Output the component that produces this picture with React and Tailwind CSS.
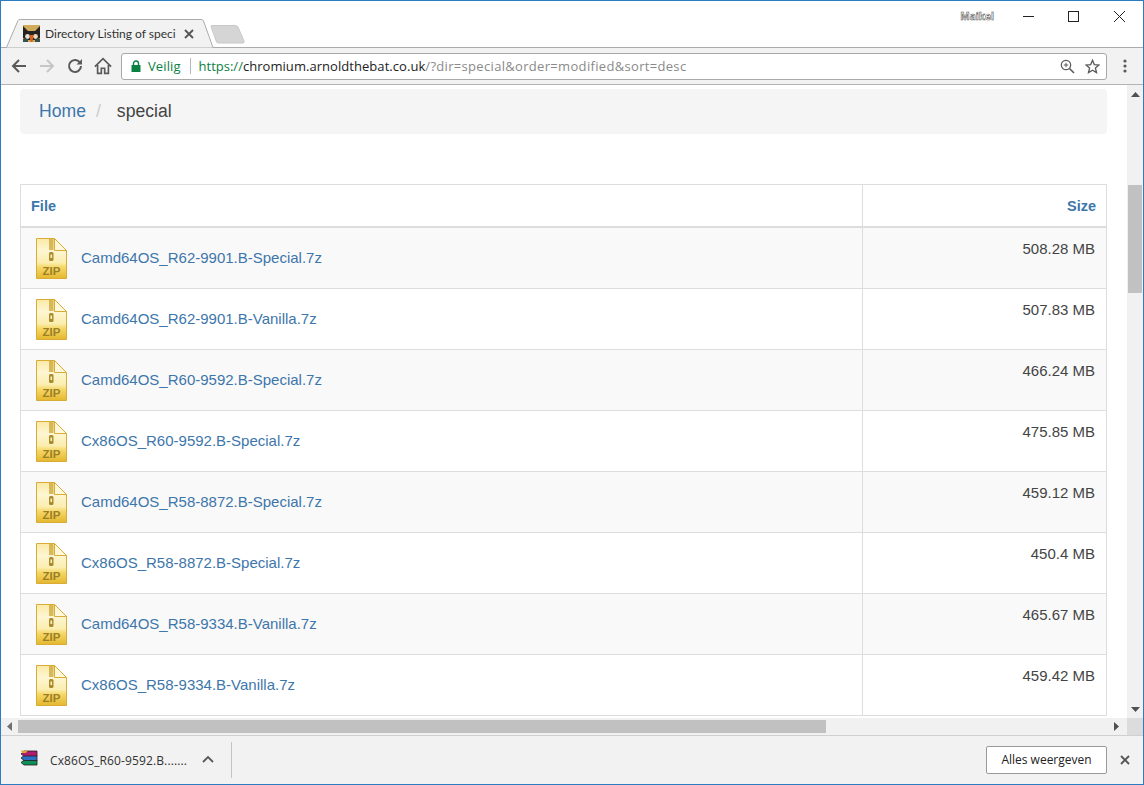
import React from "react";

const rows = [
  ["Camd64OS_R62-9901.B-Special.7z", "508.28 MB"],
  ["Camd64OS_R62-9901.B-Vanilla.7z", "507.83 MB"],
  ["Camd64OS_R60-9592.B-Special.7z", "466.24 MB"],
  ["Cx86OS_R60-9592.B-Special.7z", "475.85 MB"],
  ["Camd64OS_R58-8872.B-Special.7z", "459.12 MB"],
  ["Cx86OS_R58-8872.B-Special.7z", "450.4 MB"],
  ["Camd64OS_R58-9334.B-Vanilla.7z", "465.67 MB"],
  ["Cx86OS_R58-9334.B-Vanilla.7z", "459.42 MB"],
];

function ZipIcon({ id, first }) {
  return (
    <svg width="31" height="41" viewBox="0 0 31 41" className={first ? "block shrink-0 translate-y-px" : "block shrink-0"}>
      <defs>
        <linearGradient id={id} x1="0" y1="0" x2="0" y2="1">
          <stop offset="0" stopColor="#fbe9a6" />
          <stop offset="0.3" stopColor="#fdf6d2" />
          <stop offset="0.6" stopColor="#fbeeb0" />
          <stop offset="0.72" stopColor="#f5d868" />
          <stop offset="1" stopColor="#e4b72e" />
        </linearGradient>
      </defs>
      <path d="M0.5 0.5H18.5L30.5 12.5V40.5H0.5Z" fill={`url(#${id})`} stroke="#d9ad35" />
      <path d="M18.5 0.5V12.5H30.5Z" fill="#fff8da" stroke="#d9ad35" />
      <rect x="13" y="1" width="4.5" height="11" fill="#c9a02c" opacity="0.7" />
      <rect x="13" y="14" width="4.5" height="9" rx="1.5" fill="#a98a2c" />
      <rect x="14.4" y="16.5" width="1.7" height="3.5" fill="#fbeeb0" />
      <text x="15.5" y="37" textAnchor="middle" fontFamily="'Liberation Sans', sans-serif" fontWeight="700" fontSize="11.5" fill="#9b7f26">ZIP</text>
    </svg>
  );
}

function Favicon() {
  return (
    <svg width="17" height="17" viewBox="0 0 17 17" className="block shrink-0">
      <rect width="17" height="17" fill="#d0ab5c" />
      <path d="M0 1 5 6 12 6 17 1V13L13 15H4L0 13Z" fill="#26221e" />
      <circle cx="4.5" cy="11.5" r="2.4" fill="#e4dfd6" />
      <circle cx="12.5" cy="11.5" r="2.4" fill="#e8d9bf" />
      <path d="M6.5 10H10.5L9.5 17H7.5Z" fill="#dc5f1c" />
      <rect x="0" y="14" width="5" height="3" fill="#34504f" />
      <rect x="12" y="14" width="5" height="3" fill="#34504f" />
    </svg>
  );
}

function Tab() {
  return (
    <div className="relative w-[213px] h-[29px] ml-[5px] flex items-center pl-[17px] pr-[20px]">
      <svg width="213" height="29" viewBox="0 0 213 29" className="absolute left-0 top-0">
        <path d="M0.5 28.5 12 1.5Q12.5 0.5 14 0.5H195Q197 0.5 197.5 2L207 28.5" fill="#f2f2f2" stroke="#ababab" />
      </svg>
      <div className="relative flex items-center w-full">
        <Favicon />
        <span className="ml-[5px] w-[131px] whitespace-nowrap text-[12px] leading-[16px] text-[#333] font-['Lato',sans-serif]">
          Directory Listing of speci
        </span>
        <svg width="10" height="10" viewBox="0 0 10 10" className="ml-[8px]">
          <path d="M1 1 9 9M9 1 1 9" stroke="#555" strokeWidth="1.8" />
        </svg>
      </div>
    </div>
  );
}

function TitleBar() {
  return (
    <div className="relative h-[47px] shrink-0 bg-white flex items-end border-b border-[#ababab]">
      <div className="flex items-end -mb-px z-10">
        <Tab />
        <svg width="36" height="20" viewBox="0 0 36 20" className="-ml-[9px] mb-[3px]">
          <path d="M1 1.5Q1 0.5 2 0.5H25Q27 0.5 28 2L34 16Q34.5 18 33 18H8Q7 18 6.5 17Z" fill="#d5d5d5" stroke="#c8c8c8" />
        </svg>
      </div>
      <div className="ml-auto self-start flex items-start">
        <span className="mt-[8px] mr-[11px] text-[10px] leading-[14px] font-bold text-white [-webkit-text-stroke:0.5px_#444] font-['Open_Sans',sans-serif]">
          Maikel
        </span>
        <div className="w-[46px] h-[30px] flex items-center justify-center">
          <svg width="11" height="11" viewBox="0 0 11 11"><path d="M0 5.5H11" stroke="#222" /></svg>
        </div>
        <div className="w-[45px] h-[30px] flex items-center justify-center">
          <svg width="11" height="11" viewBox="0 0 11 11"><rect x="0.5" y="0.5" width="10" height="10" fill="none" stroke="#222" /></svg>
        </div>
        <div className="w-[46px] h-[30px] flex items-center justify-center mr-[1px]">
          <svg width="11" height="11" viewBox="0 0 11 11"><path d="M0 0 11 11M11 0 0 11" stroke="#222" /></svg>
        </div>
      </div>
    </div>
  );
}

function Toolbar() {
  const dark = "#5a5a5a";
  return (
    <div className="h-[37px] shrink-0 bg-[#f2f2f2] border-b border-[#b4b4b4] flex items-center">
      <div className="w-[120px] flex items-center shrink-0">
        <svg width="16" height="16" viewBox="0 0 16 16" className="ml-[10px]"><path d="M15 8H2M8 2 2 8l6 6" fill="none" stroke={dark} strokeWidth="2" /></svg>
        <svg width="16" height="16" viewBox="0 0 16 16" className="ml-[12px]"><path d="M1 8H14M8 2l6 6-6 6" fill="none" stroke="#c6c6c6" strokeWidth="2" /></svg>
        <svg width="16" height="16" viewBox="0 0 16 16" className="ml-[12px]">
          <path d="M13.2 5A6 6 0 1 0 14 8" fill="none" stroke={dark} strokeWidth="2" />
          <path d="M15 1V6.5H9.5Z" fill={dark} />
        </svg>
        <svg width="18" height="18" viewBox="0 0 16 16" className="ml-[11px]">
          <path d="M0.8 8.5 8 1.5l7.2 7M3.2 7V14.5H6.5V10H9.5V14.5H12.8V7" fill="none" stroke={dark} strokeWidth="1.5" />
        </svg>
      </div>
      <div className="w-[986px] h-[27px] shrink-0 bg-white border border-[#a9a9a9] rounded-[3px] flex items-center font-['Open_Sans',sans-serif] text-[13px] whitespace-nowrap">
        <svg width="10" height="12" viewBox="0 0 10 12" className="ml-[9px]">
          <path d="M2.5 5V3.5a2.5 2.5 0 0 1 5 0V5" fill="none" stroke="#0b8043" strokeWidth="1.4" />
          <rect x="0.5" y="5" width="9" height="7" rx="0.5" fill="#0b8043" />
        </svg>
        <span className="ml-[7px] mt-[1px] text-[#0b8043] tracking-[0.1px]">Veilig</span>
        <span className="ml-[9px] w-px h-[16px] bg-[#b8b8b8]" />
        <span className="ml-[8px] mt-[1px]">
          <span className="text-[#0b8043]">https://</span>
          <span className="text-[#222] tracking-[0.05px]">chromium.arnoldthebat.co.uk</span>
          <span className="text-[#8a8a8a] tracking-[0.32px]">/?dir=special&amp;order=modified&amp;sort=desc</span>
        </span>
        <svg width="15" height="15" viewBox="0 0 15 15" className="ml-auto">
          <circle cx="6" cy="6" r="4.7" fill="none" stroke={dark} strokeWidth="1.2" />
          <path d="M9.5 9.5 14 14" stroke={dark} strokeWidth="1.6" />
          <path d="M3.8 6H8.2M6 3.8V8.2" stroke={dark} />
        </svg>
        <svg width="15" height="15" viewBox="0 0 15 15" className="ml-[10px] mr-[6px]">
          <path d="M7.5 1.3 9.3 5.6 14 6 10.4 9 11.5 13.6 7.5 11.2 3.5 13.6 4.6 9 1 6 5.7 5.6Z" fill="none" stroke={dark} strokeWidth="1.3" />
        </svg>
      </div>
      <svg width="4" height="14" viewBox="0 0 4 14" className="ml-[16px]">
        <circle cx="2" cy="2" r="1.6" fill={dark} />
        <circle cx="2" cy="7" r="1.6" fill={dark} />
        <circle cx="2" cy="12" r="1.6" fill={dark} />
      </svg>
    </div>
  );
}

function Listing() {
  return (
    <div className="pl-[19px] pr-[20px] pt-[4px] font-['Liberation_Sans',sans-serif] text-[15px] text-[#444]">
      <div className="h-[45px] bg-[#f5f5f5] rounded-[4px] flex items-center pl-[19px] text-[17.6px]">
        <span className="text-[#3d76ab]">Home</span>
        <span className="ml-[10px] text-[#ccc]">/</span>
        <span className="ml-[16px] text-[#444]">special</span>
      </div>
      <table className="mt-[50px] w-[1087px] table-fixed border-collapse border border-[#ddd] bg-white">
        <thead>
          <tr className="h-[42px] border-b-2 border-[#ddd]">
            <th className="w-[842px] border-r border-[#ddd] px-[10px] pt-[4px] text-left text-[#3d76ab] text-[14.5px]">File</th>
            <th className="px-[10px] pt-[4px] text-right text-[#3d76ab] text-[14.5px]">Size</th>
          </tr>
        </thead>
        <tbody>
          {rows.map(([name, size], i) => (
            <tr key={name} className={`${i === 0 ? "h-[62px]" : "h-[61px]"} border-b border-[#ddd] ${i % 2 === 0 ? "bg-[#f9f9f9]" : "bg-white"}`}>
              <td className="border-r border-[#ddd] pl-[15px] py-0">
                <div className="flex items-center">
                  <ZipIcon id={`zip${i}`} first={i === 0} />
                  <span className="ml-[14px] text-[#3d76ab]">{name}</span>
                </div>
              </td>
              <td className="align-top pt-[11px] pr-[11px] text-right leading-[20px]">{size}</td>
            </tr>
          ))}
        </tbody>
      </table>
    </div>
  );
}

function VScroll() {
  return (
    <div className="w-[16px] shrink-0 bg-[#f1f1f1] flex flex-col items-center">
      <svg width="9" height="6" viewBox="0 0 9 6" className="mt-[7px]"><path d="M4.5 0 9 5H0Z" fill="#505050" /></svg>
      <div className="mt-[87px] w-[14px] h-[108px] bg-[#c1c1c1]" />
      <svg width="9" height="6" viewBox="0 0 9 6" className="mt-auto mb-[5px]"><path d="M0 0H9L4.5 5Z" fill="#505050" /></svg>
    </div>
  );
}

function HScroll() {
  return (
    <div className="h-[18px] shrink-0 bg-[#f1f1f1] flex items-center border-b border-[#d0d0d0]">
      <svg width="6" height="9" viewBox="0 0 6 9" className="ml-[6px]"><path d="M5 0V9L0 4.5Z" fill="#707070" /></svg>
      <div className="ml-[5px] w-[808px] h-[13px] bg-[#c1c1c1]" />
      <svg width="6" height="9" viewBox="0 0 6 9" className="ml-auto mr-[7px]"><path d="M0 0V9L5 4.5Z" fill="#505050" /></svg>
      <div className="w-[16px] h-full bg-[#dcdcdc]" />
    </div>
  );
}

function RarIcon() {
  return (
    <svg width="18" height="17" viewBox="0 0 18 17" className="block shrink-0">
      <path d="M1 12.5 4 10H17V15H4Z" fill="#0d8f55" stroke="#222" strokeWidth="0.8" />
      <path d="M1 8 4 5.5H17V10.5H4Z" fill="#2c6fc4" stroke="#222" strokeWidth="0.8" />
      <path d="M1 4 4 1H17V6H4Z" fill="#b01c6e" stroke="#222" strokeWidth="0.8" />
      <path d="M1 0.5H8L6 3H2Z" fill="#d9a23c" />
    </svg>
  );
}

function DownloadBar() {
  return (
    <div className="flex-1 bg-[#f2f2f2] flex items-center font-['Open_Sans',sans-serif] text-[12px] text-[#333]">
      <div className="ml-[19px] -mt-[3px]"><RarIcon /></div>
      <span className="ml-[12px] mt-[2px] whitespace-nowrap tracking-[0.12px]">Cx86OS_R60-9592.B.......</span>
      <svg width="12" height="7" viewBox="0 0 12 7" className="ml-[15px] -mt-[2px]"><path d="M1 6 6 1l5 5" fill="none" stroke="#5a5a5a" strokeWidth="1.8" /></svg>
      <span className="ml-[17px] w-px h-[36px] bg-[#c4c4c4]" />
      <div className="ml-auto w-[121px] h-[28px] bg-white border border-[#9a9a9a] rounded-[2px] flex items-center justify-center text-[#222]">
        Alles weergeven
      </div>
      <svg width="10" height="10" viewBox="0 0 10 10" className="ml-[13px] mr-[13px]"><path d="M1 1 9 9M9 1 1 9" stroke="#555" strokeWidth="1.8" /></svg>
    </div>
  );
}

export default function App() {
  return (
    <div className="w-[1144px] h-[785px] box-border border border-[#2b7cc0] bg-white flex flex-col overflow-hidden">
      <TitleBar />
      <Toolbar />
      <div className="h-[651px] shrink-0 flex flex-col overflow-hidden">
        <div className="flex-1 min-h-0 flex overflow-hidden">
          <div className="flex-1 min-w-0 overflow-hidden"><Listing /></div>
          <VScroll />
        </div>
        <HScroll />
      </div>
      <DownloadBar />
    </div>
  );
}
